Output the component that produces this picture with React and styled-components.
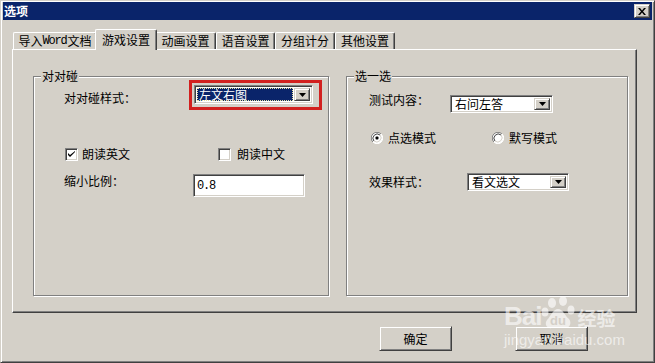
import React from 'react';
import styled, { createGlobalStyle } from 'styled-components';

const FONT = `"Noto Sans CJK SC", "Noto Sans", sans-serif`;
const FACE = '#d4d0c8';

const GlobalStyle = createGlobalStyle`
  html, body { margin: 0; padding: 0; background: ${FACE}; }
  body { font-family: ${FONT}; font-size: 12px; color: #000; }
  * { box-sizing: border-box; }
`;

const Window = styled.div`
  position: relative;
  width: 655px;
  height: 363px;
  background: ${FACE};
  border-top: 1px solid ${FACE};
  border-left: 1px solid ${FACE};
  border-right: 1px solid #404040;
  border-bottom: 1px solid #404040;
  box-shadow: inset 1px 1px 0 #fff, inset -1px -1px 0 #808080;
  padding: 1px 2px 2px 2px;
  display: flex;
  flex-direction: column;
  font-family: ${FONT};
  font-size: 12px;
  overflow: hidden;
`;

const TitleBar = styled.div`
  height: 18px;
  background: #0a246a;
  display: flex;
  align-items: center;
  justify-content: space-between;
  padding-left: 1px;
`;

const TitleText = styled.span`
  color: #fff;
  font-weight: 700;
  font-size: 12px;
  line-height: 14px;
`;

const RaisedBox = styled.div`
  background: ${FACE};
  border-top: 1px solid ${FACE};
  border-left: 1px solid ${FACE};
  border-right: 1px solid #404040;
  border-bottom: 1px solid #404040;
  box-shadow: inset 1px 1px 0 #fff, inset -1px -1px 0 #808080;
  display: flex;
  align-items: center;
  justify-content: center;
`;

const CloseButton = styled(RaisedBox)`
  width: 16px;
  height: 14px;
  margin-right: 2px;
`;

const Body = styled.div`
  display: flex;
  flex-direction: column;
  padding: 9px 0 0 9px;
`;

const TabStrip = styled.div`
  display: flex;
  align-items: flex-end;
  height: 20px;
  padding-left: 1px;
`;

const Tab = styled.div`
  position: relative;
  width: ${p => p.$w + (p.$active ? 4 : 0)}px;
  height: ${p => (p.$active ? 21 : 17)}px;
  margin: 0 ${p => (p.$active ? -2 : 0)}px ${p => (p.$active ? -1 : 0)}px;
  z-index: ${p => (p.$active ? 2 : 1)};
  background: ${FACE};
  border-top: 1px solid #fff;
  border-left: 1px solid #fff;
  border-right: 1px solid #404040;
  box-shadow: inset -1px 0 0 #808080;
  border-radius: 2px 2px 0 0;
  display: flex;
  align-items: ${p => (p.$active ? 'flex-start' : 'center')};
  padding-top: ${p => (p.$active ? 3 : 0)}px;
  justify-content: center;
  font-size: 12px;
  line-height: 14px;
  white-space: nowrap;
`;

const Latin = styled.span`
  font-family: "Liberation Mono", monospace;
  font-size: 12px;
  letter-spacing: -1.2px;
  margin-right: 1px;
`;

const Panel = styled.div`
  width: 625px;
  height: 264px;
  background: ${FACE};
  border-top: 1px solid #fff;
  border-left: 1px solid #fff;
  border-right: 1px solid #404040;
  border-bottom: 1px solid #404040;
  box-shadow: inset -1px -1px 0 #808080;
  display: flex;
  align-items: flex-start;
  gap: 17px;
  padding: 26px 0 0 20px;
`;

const GroupBox = styled.div`
  position: relative;
  width: ${p => p.$w}px;
  height: 220px;
  border: 1px solid #808080;
  box-shadow: 1px 1px 0 #fff, inset 1px 1px 0 #fff;
  display: flex;
  flex-direction: column;
`;

const Legend = styled.span`
  position: absolute;
  top: -8px;
  left: 7px;
  padding: 0 1px;
  background: ${FACE};
  line-height: 14px;
  font-size: 12px;
`;

const Row = styled.div`
  display: flex;
  align-items: ${p => p.$align || 'flex-start'};
  margin-top: ${p => p.$top}px;
  padding-left: ${p => p.$left}px;
`;

const Label = styled.span`
  width: ${p => p.$w}px;
  flex: none;
  padding-top: ${p => p.$pt || 0}px;
  line-height: 14px;
  white-space: nowrap;
`;

const RedFrame = styled.div`
  border: 3px solid #d2201f;
  padding: 2px 6px 3px 2px;
  display: flex;
`;

const Sunken = styled.div`
  background: #fff;
  border-top: 1px solid #808080;
  border-left: 1px solid #808080;
  border-right: 1px solid #fff;
  border-bottom: 1px solid #fff;
  box-shadow: inset 1px 1px 0 #404040, inset -1px -1px 0 ${FACE};
`;

const Combo = styled(Sunken)`
  width: ${p => p.$w}px;
  height: ${p => p.$h}px;
  margin-top: ${p => p.$mt || 0}px;
  display: flex;
  align-items: stretch;
  padding: 2px;
  flex: none;
`;

const ComboText = styled.div`
  flex: 1;
  display: flex;
  align-items: center;
  padding-left: 2px;
  line-height: 14px;
  white-space: nowrap;
  background: ${p => (p.$selected ? '#0a246a' : 'transparent')};
  color: ${p => (p.$selected ? '#fff' : '#000')};
  outline: ${p => (p.$selected ? '1px dotted #e8e0a0' : 'none')};
  outline-offset: -1px;
  margin-right: 1px;
`;

const DropButton = styled(RaisedBox)`
  width: 16px;
  flex: none;
`;

const TextBox = styled(Sunken)`
  width: ${p => p.$w}px;
  height: 23px;
  padding: 4px 0 0 3px;
  font-family: "Liberation Mono", monospace;
  font-size: 12px;
  letter-spacing: -1.2px;
  line-height: 14px;
`;

const CheckItem = styled.label`
  display: flex;
  align-items: center;
  gap: ${p => p.$gap || 5}px;
  width: ${p => (p.$w ? `${p.$w}px` : 'auto')};
  line-height: 14px;
  white-space: nowrap;
`;

const CheckBoxBox = styled(Sunken)`
  width: 13px;
  height: 13px;
  flex: none;
  display: flex;
  align-items: center;
  justify-content: center;
`;

const ButtonRow = styled.div`
  display: flex;
  gap: 63px;
  margin-top: 13px;
  padding-left: 376px;
`;

const PushButton = styled(RaisedBox)`
  width: 73px;
  height: 25px;
  font-size: 12px;
  line-height: 14px;
`;

const Watermark = styled.div`
  position: absolute;
  left: 503px;
  top: 290px;
  display: flex;
  flex-direction: column;
  color: rgba(255, 255, 255, 0.62);
  pointer-events: none;
`;

const WmTop = styled.div`
  display: flex;
  align-items: flex-end;
  height: 40px;
`;

const WmBai = styled.span`
  font-family: "Liberation Sans", Arial, sans-serif;
  font-weight: 700;
  font-size: 26px;
  line-height: 26px;
  letter-spacing: -1px;
  margin-bottom: 2px;
`;

const WmJy = styled.span`
  font-family: ${FONT};
  font-weight: 700;
  font-size: 19px;
  line-height: 22px;
  margin-bottom: 2px;
`;

const WmUrl = styled.span`
  font-family: "Liberation Sans", Arial, sans-serif;
  font-size: 15px;
  line-height: 16px;
  margin-top: 1px;
`;

const DropArrow = () => (
  <svg width="7" height="4" viewBox="0 0 7 4">
    <path d="M0 0h7L3.5 4z" fill="#000" />
  </svg>
);

const ComboBox = ({ w, h, mt, text, selected }) => (
  <Combo $w={w} $h={h} $mt={mt}>
    <ComboText $selected={selected}>{text}</ComboText>
    <DropButton>
      <DropArrow />
    </DropButton>
  </Combo>
);

const CheckBox = ({ checked, label, w, gap }) => (
  <CheckItem $w={w} $gap={gap}>
    <CheckBoxBox>
      {checked && (
        <svg width="7" height="7" viewBox="0 0 7 7">
          <path d="M0 2v2l2 2 5-5V0L2 4z" fill="#000" />
        </svg>
      )}
    </CheckBoxBox>
    {label}
  </CheckItem>
);

const Radio = ({ checked, label, w }) => (
  <CheckItem $w={w} $gap={5}>
    <svg width="12" height="12" viewBox="0 0 12 12">
      <circle cx="6" cy="6" r="5.5" fill="#fff" />
      <path d="M10 2A5.5 5.5 0 0 0 1.9 10" stroke="#808080" strokeWidth="1" fill="none" />
      <path d="M9 3A4.3 4.3 0 0 0 2.9 9" stroke="#404040" strokeWidth="1" fill="none" />
      <path d="M2 10A5.5 5.5 0 0 0 10.1 2" stroke="#fff" strokeWidth="1" fill="none" />
      <path d="M3 9A4.3 4.3 0 0 0 9.1 3" stroke={FACE} strokeWidth="1" fill="none" />
      {checked && <rect x="4.5" y="4.5" width="3" height="3" rx="1" fill="#000" />}
    </svg>
    {label}
  </CheckItem>
);

const Paw = () => (
  <svg width="36" height="36" viewBox="0 0 36 36">
    <g fill="rgba(255,255,255,0.62)">
      <ellipse cx="11" cy="8" rx="4" ry="5" />
      <ellipse cx="22" cy="6" rx="4" ry="5" />
      <ellipse cx="4" cy="17" rx="3.5" ry="4.5" />
      <ellipse cx="30" cy="15" rx="3.5" ry="4.5" />
      <path d="M17 14c-5 0-7 7-11 11-3 4 0 9 5 8 3 0 4-1 6-1s4 1 7 1c5 0 7-5 4-9-4-3-6-10-11-10z" />
    </g>
    <text x="17" y="30" textAnchor="middle" fontFamily="Liberation Sans, Arial, sans-serif" fontWeight="700" fontSize="13" fill={FACE}>du</text>
  </svg>
);

const tabs = [
  { label: <>导入<Latin>Word</Latin>文档</>, key: 'word', w: 84 },
  { label: '游戏设置', key: 'game', w: 58, active: true },
  { label: '动画设置', key: 'anim', w: 61 },
  { label: '语音设置', key: 'voice', w: 59 },
  { label: '分组计分', key: 'score', w: 60 },
  { label: '其他设置', key: 'other', w: 60 },
];

export default function App() {
  return (
    <>
      <GlobalStyle />
      <Window>
        <TitleBar>
          <TitleText>选项</TitleText>
          <CloseButton>
            <svg width="8" height="7" viewBox="0 0 8 7">
              <path d="M0 0h2l2 2.5L6 0h2L5 3.5 8 7H6L4 4.5 2 7H0l3-3.5z" fill="#000" />
            </svg>
          </CloseButton>
        </TitleBar>
        <Body>
          <TabStrip>
            {tabs.map(t => (
              <Tab key={t.key} $w={t.w} $active={t.active}>
                {t.label}
              </Tab>
            ))}
          </TabStrip>
          <Panel>
            <GroupBox $w={296}>
              <Legend>对对碰</Legend>
              <Row $top={3} $left={30}>
                <Label $w={125} $pt={11}>对对碰样式：</Label>
                <RedFrame>
                  <ComboBox w={119} h={19} text="左文右图" selected />
                </RedFrame>
              </Row>
              <Row $top={37} $left={31} $align="center">
                <CheckBox checked label="朗读英文" w={153} gap={4} />
                <CheckBox label="朗读中文" gap={6} />
              </Row>
              <Row $top={13} $left={30}>
                <Label $w={129}>缩小比例：</Label>
                <TextBox $w={112}>0.8</TextBox>
              </Row>
            </GroupBox>
            <GroupBox $w={282}>
              <Legend>选一选</Legend>
              <Row $top={16} $left={22}>
                <Label $w={81}>测试内容：</Label>
                <ComboBox w={103} h={18} mt={2} text="右问左答" />
              </Row>
              <Row $top={18} $left={24} $align="center">
                <Radio checked label="点选模式" w={121} />
                <Radio label="默写模式" />
              </Row>
              <Row $top={28} $left={22} $align="center">
                <Label $w={98}>效果样式：</Label>
                <ComboBox w={102} h={18} text="看文选文" />
              </Row>
            </GroupBox>
          </Panel>
        </Body>
        <ButtonRow>
          <PushButton>确定</PushButton>
          <PushButton>取消</PushButton>
        </ButtonRow>
        <Watermark>
          <WmTop>
            <WmBai>Bai</WmBai>
            <Paw />
            <WmJy>经验</WmJy>
          </WmTop>
          <WmUrl>jingyan.baidu.com</WmUrl>
        </Watermark>
      </Window>
    </>
  );
}
